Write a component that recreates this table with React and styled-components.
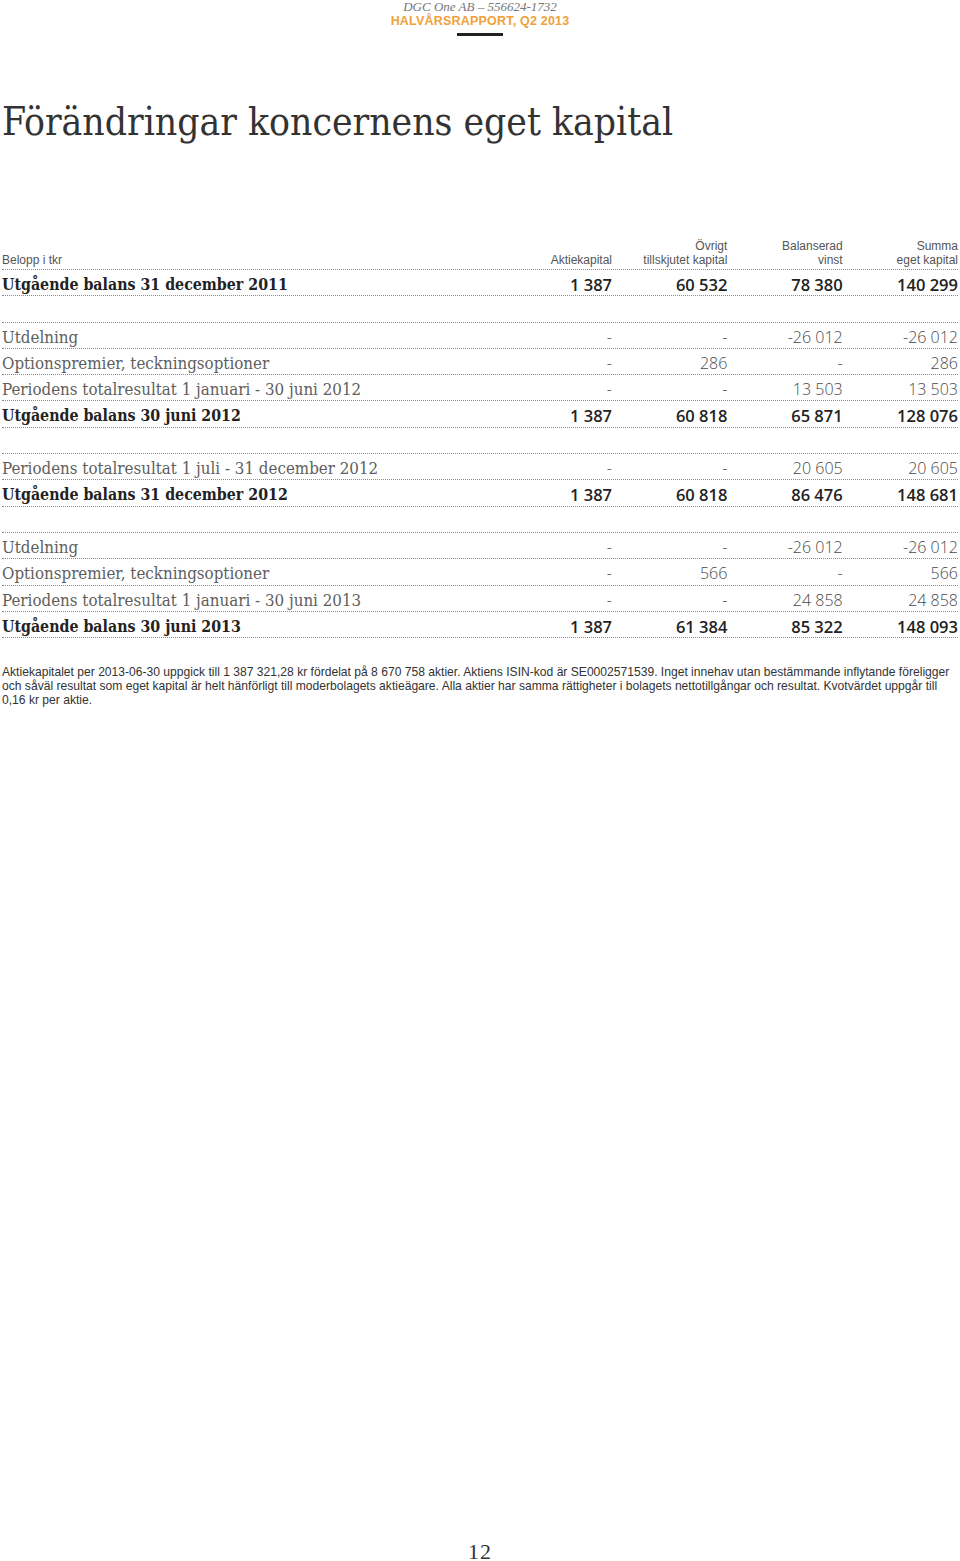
import React from "react";
import styled, { createGlobalStyle } from "styled-components";

const GlobalStyle = createGlobalStyle`
  html, body {
    margin: 0;
    padding: 0;
    background: #fff;
  }
`;

const Page = styled.div`
  width: 960px;
  min-height: 1561px;
  display: flex;
  flex-direction: column;
  box-sizing: border-box;
  padding: 0 2px;
  color: #222;
`;

const Masthead = styled.header`
  display: flex;
  flex-direction: column;
  align-items: center;
`;

const Company = styled.div`
  font-family: "Liberation Serif", serif;
  font-style: italic;
  font-size: 13px;
  line-height: 14px;
  color: #777;
`;

const Report = styled.div`
  font-family: "Liberation Sans", Arial, sans-serif;
  font-weight: 700;
  font-size: 12.5px;
  line-height: 15px;
  color: #eea13c;
  letter-spacing: 0.2px;
`;

const Bar = styled.div`
  width: 46px;
  height: 3px;
  margin-top: 4px;
  background: #222;
`;

const Title = styled.h1`
  margin: 62px 0 0;
  font-family: "DejaVu Serif Condensed", "DejaVu Serif", serif;
  font-weight: 400;
  font-size: 38.7px;
  line-height: 48px;
  color: #333;
`;

const Table = styled.div`
  margin-top: 93px;
  display: flex;
  flex-direction: column;
`;

const Row = styled.div`
  display: grid;
  grid-template-columns: 1fr repeat(4, 115.33px);
  box-sizing: border-box;
  height: ${(p) => (p.$head ? "31px" : "26.3px")};
  padding: ${(p) => (p.$head ? "0 0 2px" : "3px 0 0")};
  align-items: ${(p) => (p.$head ? "end" : "center")};
  border-bottom: 1px dotted #8a8a8a;
`;

const HeadCell = styled.div`
  font-family: "Liberation Sans", Arial, sans-serif;
  font-size: 12px;
  line-height: 14px;
  color: #555;
  text-align: ${(p) => (p.$left ? "left" : "right")};
`;

const Label = styled.div`
  font-family: "DejaVu Serif Condensed", "DejaVu Serif", serif;
  font-size: ${(p) => (p.$bold ? "15.8px" : "16.8px")};
  font-weight: ${(p) => (p.$bold ? 700 : 400)};
  color: ${(p) => (p.$bold ? "#222" : "#5e5e5e")};
  white-space: nowrap;
`;

const Num = styled.div`
  font-family: "Open Sans", sans-serif;
  font-size: ${(p) => (p.$bold ? "16.5px" : "16px")};
  font-weight: ${(p) => (p.$bold ? 600 : 300)};
  color: ${(p) => (p.$bold ? "#222" : "#4a4a4a")};
  text-align: right;
  white-space: nowrap;
`;

const Note = styled.p`
  margin: 27px 0 0;
  padding-right: 2px;
  font-family: "Liberation Sans", Arial, sans-serif;
  font-size: 12.1px;
  line-height: 14px;
  color: #333;
`;

const PageNumber = styled.div`
  margin-top: auto;
  text-align: center;
  font-family: "Liberation Serif", serif;
  font-size: 22px;
  line-height: 18px;
  color: #333;
  letter-spacing: 1px;
`;

const groups = [
  [["Utgående balans 31 december 2011", "1 387", "60 532", "78 380", "140 299", true]],
  [
    ["Utdelning", "-", "-", "-26 012", "-26 012"],
    ["Optionspremier, teckningsoptioner", "-", "286", "-", "286"],
    ["Periodens totalresultat 1 januari - 30 juni 2012", "-", "-", "13 503", "13 503"],
    ["Utgående balans 30 juni 2012", "1 387", "60 818", "65 871", "128 076", true],
  ],
  [
    ["Periodens totalresultat 1 juli - 31 december 2012", "-", "-", "20 605", "20 605"],
    ["Utgående balans 31 december 2012", "1 387", "60 818", "86 476", "148 681", true],
  ],
  [
    ["Utdelning", "-", "-", "-26 012", "-26 012"],
    ["Optionspremier, teckningsoptioner", "-", "566", "-", "566"],
    ["Periodens totalresultat 1 januari - 30 juni 2013", "-", "-", "24 858", "24 858"],
    ["Utgående balans 30 juni 2013", "1 387", "61 384", "85 322", "148 093", true],
  ],
];

export default function App() {
  return (
    <>
      <GlobalStyle />
      <Page>
        <Masthead>
          <Company>DGC One AB – 556624-1732</Company>
          <Report>HALVÅRSRAPPORT, Q2 2013</Report>
          <Bar />
        </Masthead>

        <Title>Förändringar koncernens eget kapital</Title>

        <Table>
          <Row $head>
            <HeadCell $left>Belopp i tkr</HeadCell>
            <HeadCell>Aktiekapital</HeadCell>
            <HeadCell>
              Övrigt
              <br />
              tillskjutet kapital
            </HeadCell>
            <HeadCell>
              Balanserad
              <br />
              vinst
            </HeadCell>
            <HeadCell>
              Summa
              <br />
              eget kapital
            </HeadCell>
          </Row>
          {groups.map((rows, gi) => (
            <React.Fragment key={gi}>
              {gi > 0 && <Row />}
              {rows.map(([label, a, b, c, d, bold], ri) => (
                <Row key={ri}>
                  <Label $bold={bold}>{label}</Label>
                  <Num $bold={bold}>{a}</Num>
                  <Num $bold={bold}>{b}</Num>
                  <Num $bold={bold}>{c}</Num>
                  <Num $bold={bold}>{d}</Num>
                </Row>
              ))}
            </React.Fragment>
          ))}
        </Table>

        <Note>
          Aktiekapitalet per 2013-06-30 uppgick till 1 387 321,28 kr fördelat på 8 670 758 aktier. Aktiens
          ISIN-kod är SE0002571539. Inget innehav utan bestämmande inflytande föreligger och såväl resultat
          som eget kapital är helt hänförligt till moderbolagets aktieägare. Alla aktier har samma
          rättigheter i bolagets nettotillgångar och resultat. Kvotvärdet uppgår till 0,16 kr per aktie.
        </Note>

        <PageNumber>12</PageNumber>
      </Page>
    </>
  );
}
